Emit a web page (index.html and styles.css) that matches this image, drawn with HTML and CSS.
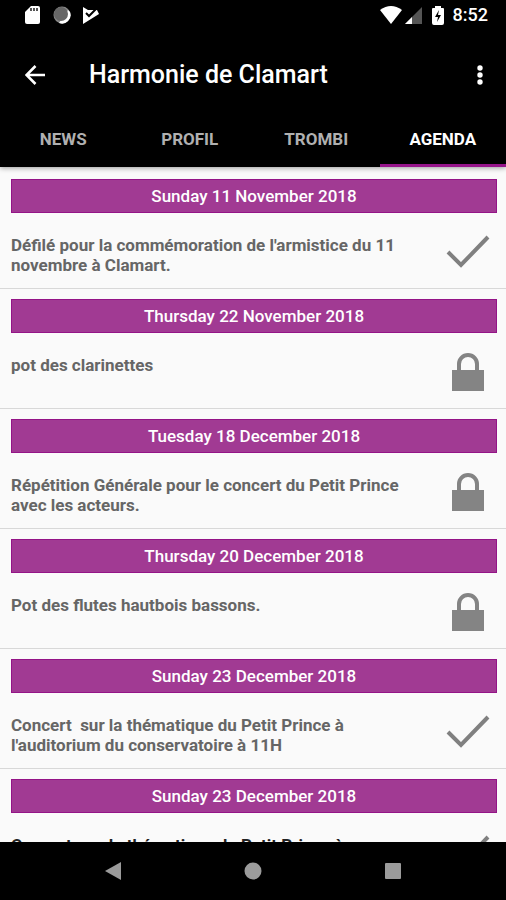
FILE: index.html
```html
<!DOCTYPE html>
<html lang="fr">
<head>
<meta charset="utf-8">
<meta name="viewport" content="width=device-width, initial-scale=1">
<title>Harmonie de Clamart</title>
<link rel="stylesheet" href="styles.css">
</head>
<body>
<svg class="defs" aria-hidden="true">
  <symbol id="check" viewBox="0 0 44 34"><path d="M2 17 15 30 42 2" fill="none" stroke="#808080" stroke-width="4"/></symbol>
  <symbol id="lock" viewBox="0 0 32 38"><path d="M0 17H5V11a11 11 0 0 1 22 0V17H32V38H0ZM9 17H23V11a7 7 0 0 0-14 0Z" fill="#848484" fill-rule="evenodd"/></symbol>
</svg>
<header class="header">
  <div class="status">
    <div class="status-group status-left">
      <svg width="16" height="20" viewBox="0 0 16 20"><path d="M6 1H13Q15 1 15 3V17Q15 19 13 19H2Q0 19 0 17V7Z" fill="#fff"/><path d="M6 3v3M9 3v3M12 3v3" stroke="#555" stroke-width="2"/></svg>
      <svg width="18" height="20" viewBox="0 0 18 20"><circle cx="9" cy="10" r="8.500" fill="#888"/><path d="M17 7a8.500 8.500 0 0 1-11 11L15 5Z" fill="#fff"/><circle cx="8" cy="9" r="7" fill="#666"/></svg>
      <svg width="16" height="20" viewBox="0 0 16 20"><path d="M0 2 5 5 14 5 16 9 0 19Z" fill="#fff"/><path d="M3 8 6 11 13 4" fill="none" stroke="#000" stroke-width="2"/></svg>
    </div>
    <div class="status-group status-right">
      <svg width="22" height="18" viewBox="0 0 22 18"><path d="M0 4Q11-4 22 4L11 18Z" fill="#fff"/></svg>
      <svg width="17" height="18" viewBox="0 0 17 18"><path d="M17 1V18H0Z" fill="#555"/><path d="M7 11V18H0Z" fill="#fff"/></svg>
      <svg class="battery" width="12" height="20" viewBox="0 0 12 20"><path d="M3 1H9V3H11Q12 3 12 4V18Q12 20 10 20H2Q0 20 0 18V4Q0 3 1 3H3Z" fill="#fff"/><path d="M7 5 3 12H6L5 17 9 10H6Z" fill="#000"/></svg>
      <time class="clock">8:52</time>
    </div>
  </div>
  <div class="toolbar">
    <button class="icon-button" aria-label="Retour"><svg width="20" height="20" viewBox="0 0 20 20"><path d="M20 10H2M10.500 1 1.500 10l9 9" fill="none" stroke="#fff" stroke-width="2.600"/></svg></button>
    <h1 class="title">Harmonie de Clamart</h1>
    <button class="icon-button" aria-label="Plus d'options"><svg width="6" height="20" viewBox="0 0 6 20"><g fill="#fff"><circle cx="3" cy="3" r="2.700"/><circle cx="3" cy="10" r="2.700"/><circle cx="3" cy="17" r="2.700"/></g></svg></button>
  </div>
  <nav class="tabs">
    <a class="tab" href="#news">NEWS</a>
    <a class="tab" href="#profil">PROFIL</a>
    <a class="tab" href="#trombi">TROMBI</a>
    <a class="tab active" href="#agenda" aria-current="page">AGENDA</a>
  </nav>
</header>
<main class="agenda">
  <article class="event"><h2 class="date">Sunday 11 November 2018</h2><div class="details"><p class="text">Défilé pour la commémoration de l'armistice du 11 novembre à Clamart.</p><svg class="check"><use href="#check"/></svg></div></article>
  <article class="event"><h2 class="date">Thursday 22 November 2018</h2><div class="details"><p class="text">pot des clarinettes</p><svg class="lock"><use href="#lock"/></svg></div></article>
  <article class="event"><h2 class="date">Tuesday 18 December 2018</h2><div class="details"><p class="text">Répétition Générale pour le concert du Petit Prince avec les acteurs.</p><svg class="lock"><use href="#lock"/></svg></div></article>
  <article class="event"><h2 class="date">Thursday 20 December 2018</h2><div class="details"><p class="text">Pot des flutes hautbois bassons.</p><svg class="lock"><use href="#lock"/></svg></div></article>
  <article class="event"><h2 class="date">Sunday 23 December 2018</h2><div class="details"><p class="text">Concert&nbsp; sur la thématique du Petit Prince à l'auditorium du conservatoire à 11H</p><svg class="check"><use href="#check"/></svg></div></article>
  <article class="event"><h2 class="date">Sunday 23 December 2018</h2><div class="details"><p class="text upcoming">Concert&nbsp; sur la thématique du Petit Prince à</p><svg class="check"><use href="#check"/></svg></div></article>
</main>
<footer class="navbar">
  <button class="nav-button" aria-label="Précédent"><svg width="18" height="18" viewBox="0 0 18 18"><path d="M17 0V18L1 9Z" fill="#9b9b9b"/></svg></button>
  <button class="nav-button" aria-label="Accueil"><svg width="18" height="18" viewBox="0 0 18 18"><circle cx="9" cy="9" r="8.500" fill="#9b9b9b"/></svg></button>
  <button class="nav-button" aria-label="Applications récentes"><svg width="18" height="18" viewBox="0 0 18 18"><rect x="1" y="1" width="16" height="16" rx="1" fill="#9b9b9b"/></svg></button>
</footer>
</body>
</html>
```
FILE: styles.css
```css
* { box-sizing: border-box; }

body {
  margin: 0;
  height: 100vh;
  display: flex;
  flex-direction: column;
  font-family: Roboto, "Liberation Sans", sans-serif;
  background: #fafafa;
}

svg { display: block; flex: none; }

.defs { position: absolute; width: 0; height: 0; }

button {
  padding: 0;
  border: 0;
  background: none;
  cursor: pointer;
}

.header {
  position: relative;
  flex: none;
  background: #000;
  color: #fff;
  box-shadow: 0 1px 5px rgba(0, 0, 0, 0.4);
}

.status {
  height: 30px;
  padding: 0 18px 0 25px;
  display: flex;
  align-items: center;
  justify-content: space-between;
}

.status-group { display: flex; align-items: center; }
.status-left { gap: 12px; }
.status-right { gap: 3px; }
.battery { margin: 0 6px 0 7px; }
.clock { font-size: 18px; font-weight: 500; line-height: 32px; }

.toolbar {
  height: 90px;
  padding: 0 4px 0 12px;
  display: flex;
  align-items: center;
}

.icon-button {
  width: 45px;
  height: 48px;
  display: flex;
  align-items: center;
  justify-content: center;
}

.title {
  flex: 1;
  margin: 0 0 0 32px;
  font-size: 25px;
  font-weight: 500;
  line-height: 30px;
}

.tabs { display: grid; grid-template-columns: repeat(4, 1fr); }

.tab {
  height: 47px;
  border-bottom: 3px solid transparent;
  color: #b0b0b0;
  font-size: 17px;
  font-weight: 700;
  line-height: 38px;
  text-align: center;
  text-decoration: none;
}

.tab.active { color: #fff; border-color: #96148a; }

.agenda {
  flex: 1;
  min-height: 0;
  overflow: hidden;
  padding-top: 2px;
}

.event {
  height: 120px;
  padding: 10px 9px 0 11px;
  border-bottom: 1px solid #d8d8d8;
}

.date {
  margin: 0;
  height: 34px;
  border: 1px solid #941487;
  background: #a13a93;
  color: #fff;
  font-size: 17px;
  font-weight: 500;
  line-height: 32px;
  text-align: center;
}

.details {
  padding-top: 20px;
  display: flex;
  justify-content: space-between;
  gap: 20px;
}

.text {
  margin: 0;
  padding-top: 2px;
  color: #666;
  font-size: 17px;
  font-weight: 700;
  line-height: 20px;
}

.text.upcoming { color: #222; }

.check { width: 44px; height: 34px; margin: 2px 7px 0 0; }
.lock { width: 32px; height: 38px; margin-right: 13px; }

.navbar {
  flex: none;
  height: 58px;
  padding: 0 43px;
  display: grid;
  grid-template-columns: repeat(3, 1fr);
  background: #000;
}

.nav-button { display: flex; align-items: center; justify-content: center; }
```
